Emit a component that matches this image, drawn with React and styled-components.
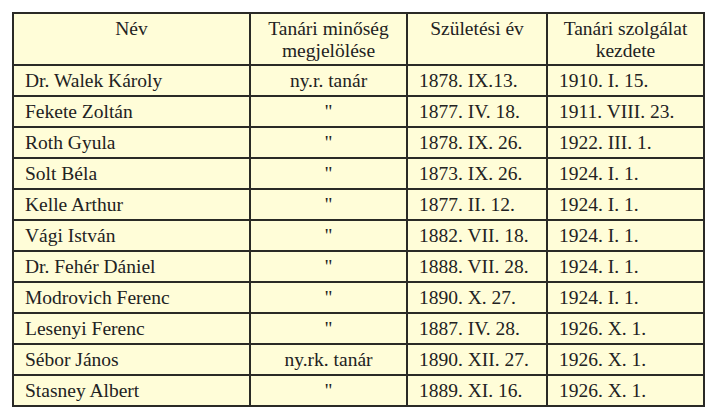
import styled, { createGlobalStyle } from "styled-components";

const rows = [
  ["Dr. Walek Károly", "ny.r. tanár", "1878. IX.13.", "1910. I. 15."],
  ["Fekete Zoltán", "\"", "1877. IV. 18.", "1911. VIII. 23."],
  ["Roth Gyula", "\"", "1878. IX. 26.", "1922. III. 1."],
  ["Solt Béla", "\"", "1873. IX. 26.", "1924. I. 1."],
  ["Kelle Arthur", "\"", "1877. II. 12.", "1924. I. 1."],
  ["Vági István", "\"", "1882. VII. 18.", "1924. I. 1."],
  ["Dr. Fehér Dániel", "\"", "1888. VII. 28.", "1924. I. 1."],
  ["Modrovich Ferenc", "\"", "1890. X. 27.", "1924. I. 1."],
  ["Lesenyi Ferenc", "\"", "1887. IV. 28.", "1926. X. 1."],
  ["Sébor János", "ny.rk. tanár", "1890. XII. 27.", "1926. X. 1."],
  ["Stasney Albert", "\"", "1889. XI. 16.", "1926. X. 1."],
];

export default function App() {
  return (
    <>
      <GlobalStyle />
      <Page>
        <Table>
          <colgroup>
            <col style={{ width: 237 }} />
            <col style={{ width: 157 }} />
            <col style={{ width: 140 }} />
            <col style={{ width: 157 }} />
          </colgroup>
          <thead>
            <tr>
              <Head>Név</Head>
              <Head>
                Tanári minőség
                <br />
                megjelölése
              </Head>
              <Head>Születési év</Head>
              <Head>
                Tanári szolgálat
                <br />
                kezdete
              </Head>
            </tr>
          </thead>
          <tbody>
            {rows.map((row, index) => (
              <tr key={index}>
                <Cell>{row[0]}</Cell>
                <Cell $center>{row[1]}</Cell>
                <Cell>{row[2]}</Cell>
                <Cell>{row[3]}</Cell>
              </tr>
            ))}
          </tbody>
        </Table>
      </Page>
    </>
  );
}

const GlobalStyle = createGlobalStyle`
  body {
    margin: 0;
    background: #ffffff;
    font-family: "Liberation Serif", "DejaVu Serif", serif;
  }
`;

const Page = styled.div`
  padding: 12px 0 0 12px;
`;

const Table = styled.table`
  border-collapse: collapse;
  table-layout: fixed;
  width: 693px;
  background: #fffdd8;
  color: #222222;
  font-family: "Liberation Serif", "DejaVu Serif", serif;
  font-size: 19.5px;
  border: 2px solid #2a2a26;
`;

const Head = styled.th`
  font-weight: 400;
  height: 46px;
  padding: 4px 6px 0;
  text-align: center;
  vertical-align: top;
  line-height: 22px;
  border: 2px solid #2a2a26;
`;

const Cell = styled.td`
  height: 29px;
  padding: 0 ${(p) => (p.$center ? "6px" : "11px")};
  text-align: ${(p) => (p.$center ? "center" : "left")};
  line-height: 22px;
  border: 2px solid #2a2a26;
  white-space: nowrap;
`;
